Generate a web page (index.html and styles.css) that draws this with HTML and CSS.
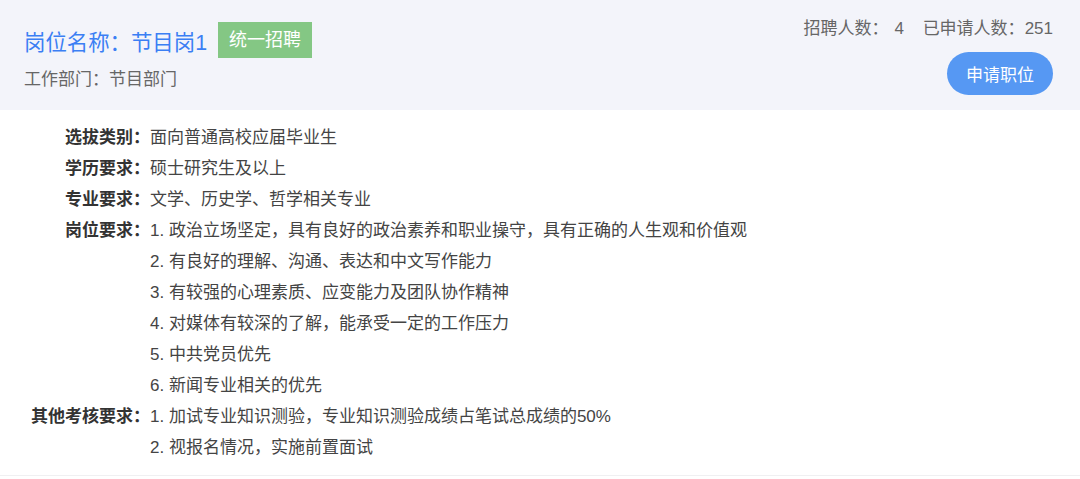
FILE: index.html
```html
<!DOCTYPE html>
<html>
<head>
    <title>岗位详情</title>
    <meta charset="utf-8">
    <link rel="stylesheet" href="styles.css">
</head>
<body>
    <div class="job-card">
        <div class="job-header">
            <div class="job-main">
                <div class="title-row">
                    <span class="job-title">岗位名称：节目岗1</span>
                    <span class="job-tag">统一招聘</span>
                </div>
                <div class="job-dept">工作部门：节目部门</div>
            </div>
            <div class="job-side">
                <div class="job-stats">
                    <span>招聘人数：</span><span class="stat-num">4</span>
                    <span class="stat-gap">已申请人数：</span><span>251</span>
                </div>
                <button class="apply-btn">申请职位</button>
            </div>
        </div>

        <div class="job-detail">
            <div class="detail-label">选拔类别：</div>
            <div class="detail-value"><div>面向普通高校应届毕业生</div></div>

            <div class="detail-label">学历要求：</div>
            <div class="detail-value"><div>硕士研究生及以上</div></div>

            <div class="detail-label">专业要求：</div>
            <div class="detail-value"><div>文学、历史学、哲学相关专业</div></div>

            <div class="detail-label">岗位要求：</div>
            <div class="detail-value">
                <div>1. 政治立场坚定，具有良好的政治素养和职业操守，具有正确的人生观和价值观</div>
                <div>2. 有良好的理解、沟通、表达和中文写作能力</div>
                <div>3. 有较强的心理素质、应变能力及团队协作精神</div>
                <div>4. 对媒体有较深的了解，能承受一定的工作压力</div>
                <div>5. 中共党员优先</div>
                <div>6. 新闻专业相关的优先</div>
            </div>

            <div class="detail-label">其他考核要求：</div>
            <div class="detail-value">
                <div>1. 加试专业知识测验，专业知识测验成绩占笔试总成绩的50%</div>
                <div>2. 视报名情况，实施前置面试</div>
            </div>
        </div>
    </div>
</body>
</html>
```

FILE: styles.css
```css
body {
    margin: 0;
    background: #fff;
    font-family: "Liberation Sans", "Noto Sans CJK SC", sans-serif;
    font-size: 17px;
    color: #444;
}
.job-card {
    border-bottom: 1px solid #f0f0f2;
}
.job-header {
    display: flex;
    justify-content: space-between;
    height: 110px;
    box-sizing: border-box;
    padding: 17px 27px 0 24px;
    background: #f3f4fa;
}
.job-main {
    margin-top: 5px;
}
.title-row {
    display: flex;
    align-items: center;
    height: 36px;
}
.job-title {
    font-size: 21.4px;
    color: #3b7ff4;
}
.job-tag {
    margin-left: 11px;
    height: 36px;
    line-height: 36px;
    padding: 0 11px;
    background: #84c784;
    color: #fff;
    font-size: 18px;
}
.job-dept {
    margin-top: 10px;
    line-height: 24px;
    color: #666;
}
.job-side {
    display: flex;
    flex-direction: column;
    align-items: flex-end;
}
.job-stats {
    line-height: 24px;
    color: #666;
}
.stat-num {
    margin-left: 6px;
}
.stat-gap {
    margin-left: 14px;
}
.apply-btn {
    margin-top: 11px;
    height: 43px;
    padding: 0 19px;
    border: none;
    border-radius: 22px;
    background: #5698f3;
    color: #fff;
    font-family: inherit;
    font-size: 17px;
    cursor: pointer;
}
.job-detail {
    display: grid;
    grid-template-columns: 120px 1fr;
    padding: 12px 0 12px 30px;
    line-height: 31px;
}
.detail-label {
    text-align: right;
    font-weight: bold;
    color: #333;
}
.detail-value {
    color: #444;
}
```
